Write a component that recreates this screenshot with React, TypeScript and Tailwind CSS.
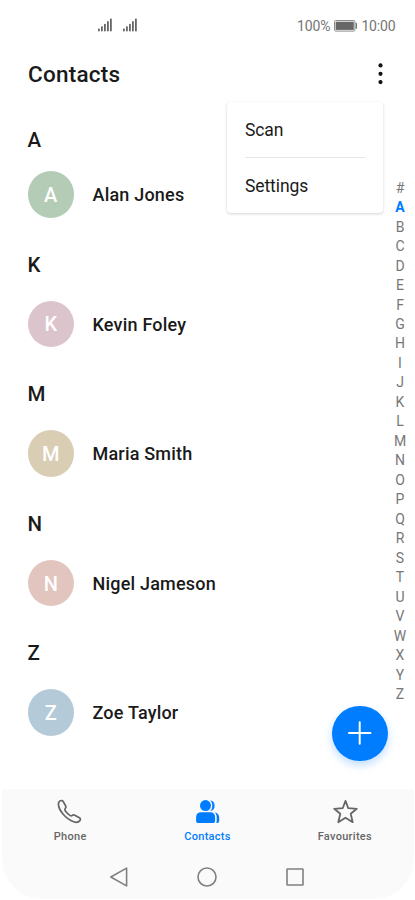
import React from "react";

interface Contact {
    letter: string;
    name: string;
    color: string;
}

const contacts: Contact[] = [
    { letter: "A", name: "Alan Jones", color: "bg-[#b4cbb5]" },
    { letter: "K", name: "Kevin Foley", color: "bg-[#dcc4cc]" },
    { letter: "M", name: "Maria Smith", color: "bg-[#d9cdb3]" },
    { letter: "N", name: "Nigel Jameson", color: "bg-[#e1c5be]" },
    { letter: "Z", name: "Zoe Taylor", color: "bg-[#b5cad8]" },
];

const indexLetters = "#ABCDEFGHIJKLMNOPQRSTUVWXYZ".split("");

function Signal() {
    return (
        <svg width="14" height="14" viewBox="0 0 14 14" fill="#666">
            <rect x="0" y="10.6" width="1.8" height="2.7" />
            <rect x="3" y="8.4" width="1.8" height="4.9" />
            <rect x="6" y="5.9" width="1.8" height="7.4" />
            <rect x="9" y="3.2" width="1.8" height="10.1" />
            <rect x="12" y="0.6" width="1.8" height="12.7" />
        </svg>
    );
}

function StatusBar() {
    return (
        <div className="flex h-[50px] items-center pl-[98px] pr-[19.5px] text-[14px] text-[#757575]">
            <div className="flex gap-[11px]">
                <Signal />
                <Signal />
            </div>
            <div className="ml-auto flex items-center pt-[2px]">
                <span className="tracking-[-0.15px]">100%</span>
                <svg className="ml-[4px] mr-[4px]" width="23" height="12" viewBox="0 0 23 12" fill="none">
                    <rect x="0.5" y="0.5" width="20.4" height="10.6" rx="1" stroke="#8c8c8c" />
                    <rect x="1.6" y="1.7" width="18.2" height="8.2" fill="#666" />
                    <rect x="21.6" y="2.8" width="1.4" height="6" rx="0.5" fill="#777" />
                </svg>
                <span className="tracking-[-0.15px]">10:00</span>
            </div>
        </div>
    );
}

function NavTab({ label, active, children }: { label: string; active?: boolean; children: React.ReactNode }) {
    return (
        <button
            type="button"
            className={`flex w-[138.4px] flex-col items-center gap-[4px] text-[11px] leading-[15px] font-medium tracking-[0.3px] ${active ? "text-[#007dff]" : "text-[#666]"}`}
        >
            {children}
            <span>{label}</span>
        </button>
    );
}

export default function App() {
    return (
        <div className="relative flex h-[900px] w-[415px] flex-col overflow-hidden bg-white font-[Roboto,sans-serif] text-[#1a1a1a]">
            <StatusBar />

            <header className="flex h-[48px] items-center justify-between pl-[28px] pr-[32px]">
                <h1 className="pb-px text-[22.5px] leading-[34px] font-medium tracking-[0.25px]">Contacts</h1>
                <svg width="5" height="22" viewBox="0 0 5 22" fill="#111">
                    <circle cx="2.5" cy="2.4" r="2.1" />
                    <circle cx="2.5" cy="10.8" r="2.1" />
                    <circle cx="2.5" cy="19.1" r="2.1" />
                </svg>
            </header>

            {/* Contact list */}
            <main className="flex flex-1 flex-col gap-[35.1px] pl-[27.5px] pt-[30px]">
                {contacts.map((c, i) => (
                    <section key={c.letter} className={`flex flex-col ${i === 0 ? "gap-[19px]" : "gap-[24px]"}`}>
                        <h2 className="text-[20.5px] leading-[24px] font-medium">{c.letter}</h2>
                        <div className="flex items-center gap-[18.5px]">
                            <div className={`flex size-[46.5px] items-center justify-center rounded-full pt-px text-[20px] font-medium text-white ${c.color}`}>
                                {c.letter}
                            </div>
                            <span className="pt-[0.5px] text-[18px] font-medium tracking-[0.2px]">{c.name}</span>
                        </div>
                    </section>
                ))}
            </main>

            {/* Alphabet index */}
            <div className="absolute right-[5px] top-[178.6px] flex w-[20px] flex-col items-center text-[14px] leading-[19.48px] text-[#777]">
                {indexLetters.map((l) => (
                    <span key={l} className={l === "A" ? "font-bold text-[#007dff]" : ""}>
                        {l}
                    </span>
                ))}
            </div>

            {/* Overflow menu */}
            <div className="absolute left-[227px] top-[102px] h-[110.5px] w-[156px] rounded-[4px] bg-white px-[18px] text-[17.5px] shadow-[0_1px_3px_rgba(0,0,0,0.18)]">
                <div className="flex h-[56px] items-center border-b border-[#e6e6e6] pt-[2px] tracking-[-0.1px]">Scan</div>
                <div className="flex h-[55px] items-center pt-[2px] tracking-[-0.1px]">Settings</div>
            </div>

            <button
                type="button"
                className="absolute left-[332px] top-[705.5px] flex size-[55.5px] items-center justify-center rounded-full bg-[#007dff] shadow-[0_4px_8px_rgba(0,125,255,0.25)]"
            >
                <svg width="24" height="24" viewBox="0 0 24 24" stroke="#fff" strokeWidth="2" strokeLinecap="round">
                    <path d="M11.7 1.3v21.4M1 12h21.4" />
                </svg>
            </button>

            <footer className="mx-[1.5px] mb-[1px] h-[110.5px] shrink-0 rounded-b-[40px] bg-[#fafafa] pt-[10.5px]">
                <nav className="flex justify-center">
                    <NavTab label="Phone">
                        <svg width="26" height="26" viewBox="0 0 26 26" fill="none" stroke="#666" strokeWidth="1.7" strokeLinejoin="round">
                            <path d="M3 1.9C4.3 1.1 5.7 1.6 6.4 2.9L8.7 7C9.3 8.1 8.9 8.9 8.2 9.5C7.5 10.2 7.7 11 8.2 11.7C9.6 13.7 11.3 15.4 13.2 16.6C14 17.1 14.7 17 15.3 16.4C16 15.8 16.8 15.7 17.8 16.2L22.4 18.8C23.5 19.5 23.7 20.6 22.9 21.6C21.5 23.4 19.3 23.7 16.7 22.8C12.7 21.4 9 18.6 6.2 15.3C3.6 12.3 1.9 9.2 1.5 6.3C1.2 4.5 1.8 2.8 3 1.9Z" />
                        </svg>
                    </NavTab>
                    <NavTab label="Contacts" active>
                        <svg width="26" height="26" viewBox="-0.5 0 26 26" fill="#007dff">
                            <circle cx="11" cy="6.6" r="5.5" />
                            <path d="M15.8 1.2a5.6 5.6 0 0 1 0 10.9A8.4 8.4 0 0 0 15.8 1.2Z" />
                            <path d="M6.6 13.3h9.2c3 0 4.8 1.7 4.8 4.7v3.8c0 1.4-.9 2.3-2.3 2.3H3.9c-1.4 0-2.3-.9-2.3-2.3V18c0-3 1.9-4.7 5-4.7Z" />
                            <path d="M20.2 13.5c3.1.4 4.5 2.3 4.5 5.5v2.8c0 1.4-.9 2.3-2.4 2.3h-.7c.4-.7.6-1.4.6-2.2V18c0-1.9-.6-3.4-2-4.5Z" />
                        </svg>
                    </NavTab>
                    <NavTab label="Favourites">
                        <svg width="26" height="26" viewBox="-0.5 0 26 26" fill="none" stroke="#666" strokeWidth="1.8" strokeLinejoin="round">
                            <path d="M13 1.9L15.8 9.2L24.3 9.8L18.2 14.8L20.2 23.2L13 18.7L5.8 23.2L7.8 14.8L1.7 9.8L10.2 9.2Z" />
                        </svg>
                    </NavTab>
                </nav>
                <div className="flex justify-center gap-[68px] pt-[22px] pr-px">
                    <svg width="20" height="22" viewBox="0 0 20 22" fill="none" stroke="#808080" strokeWidth="1.6" strokeLinejoin="round">
                        <path d="M17.6 2.1V19.9L1.8 11Z" />
                    </svg>
                    <svg width="20" height="22" viewBox="0 0 20 22" fill="none" stroke="#808080" strokeWidth="1.6">
                        <circle cx="10" cy="11" r="9" />
                    </svg>
                    <svg width="20" height="22" viewBox="0 0 20 22" fill="none" stroke="#808080" strokeWidth="1.6">
                        <rect x="2" y="3" width="16" height="16" rx="0.5" />
                    </svg>
                </div>
            </footer>
        </div>
    );
}
